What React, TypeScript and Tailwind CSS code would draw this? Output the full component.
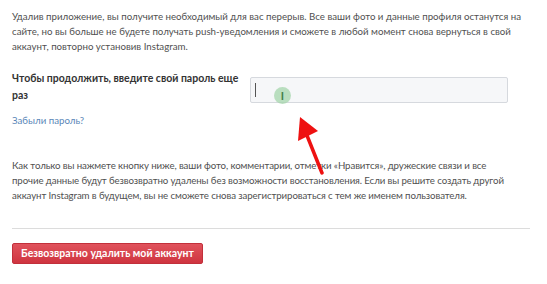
export default function App() {
  return (
    <div className="w-[547px] h-[284px] bg-white relative overflow-hidden font-['Lato',sans-serif] text-[9.7px] text-[#505050]">
      <div className="pl-3 pt-[9px]">
        <p className="leading-[15px] whitespace-nowrap">
          Удалив приложение, вы получите необходимый для вас перерыв. Все ваши фото и данные профиля останутся на
          <br />
          сайте, но вы больше не будете получать push-уведомления и сможете в любой момент снова вернуться в свой
          <br />
          аккаунт, повторно установив Instagram.
        </p>

        <div className="flex mt-[16px]">
          <label className="w-[238px] font-bold text-[#333] text-[10.5px] leading-[17px]">
            Чтобы продолжить, введите свой пароль еще раз
          </label>
          <div className="w-[258px] h-[26px] mt-[7px] border border-[#d6d9de] bg-[#f6f7f9] rounded-[2px] flex items-center pl-[4px]">
            <div className="w-px h-[14px] bg-[#555]" />
          </div>
        </div>

        <a className="block mt-[9px] text-[#5a87b8] leading-[15px]">Забыли пароль?</a>

        <p className="leading-[15px] mt-[30px] whitespace-nowrap tracking-[-0.1px]">
          Как только вы нажмете кнопку ниже, ваши фото, комментарии, отметки «Нравится», дружеские связи и все
          <br />
          прочие данные будут безвозвратно удалены без возможности восстановления. Если вы решите создать другой
          <br />
          аккаунт Instagram в будущем, вы не сможете снова зарегистрироваться с тем же именем пользователя.
        </p>

        <div className="w-[518px] border-t border-[#dcdcdc] mt-[25px]" />

        <button className="mt-[14px] h-[21px] w-[191px] rounded-[2px] bg-gradient-to-b from-[#e0525c] to-[#cf3440] text-white font-bold text-[10.5px] border border-[#c2303b] whitespace-nowrap">
          Безвозвратно удалить мой аккаунт
        </button>
      </div>

      {/* cursor highlight */}
      <div className="absolute left-[274px] top-[87px] w-[17px] h-[17px] rounded-full bg-[#9fd3a6]/70 flex items-center justify-center text-[#3f7f4a] text-[11px] font-bold leading-none">
        I
      </div>

      {/* annotation arrow */}
      <svg className="absolute left-0 top-0" width="547" height="284" viewBox="0 0 547 284">
        <line x1="322" y1="173" x2="306" y2="133" stroke="#ee1111" strokeWidth="3.5" strokeLinecap="round" />
        <polygon points="300,117 318,131 298,141" fill="#ee1111" />
      </svg>
    </div>
  );
}
